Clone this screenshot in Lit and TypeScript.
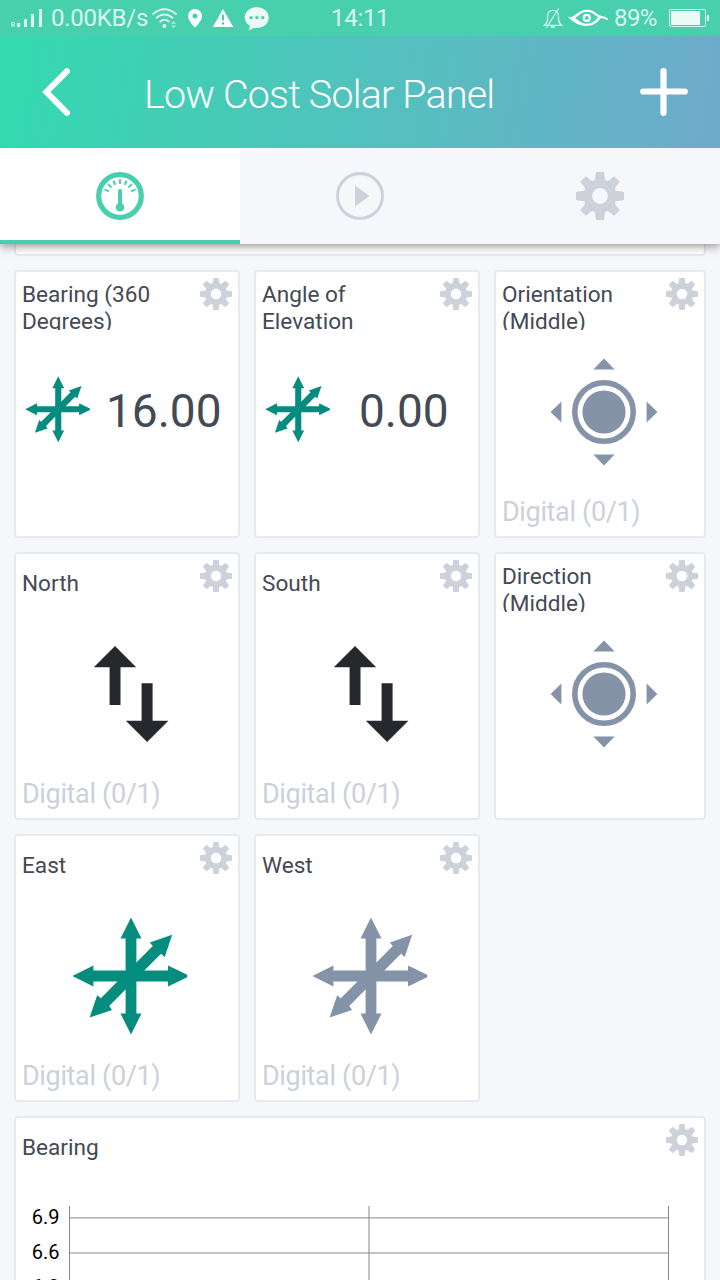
import { LitElement, html, svg, css, nothing } from "lit";
import { customElement, property } from "lit/decorators.js";

type Kind = "axes" | "joystick" | "updown";

interface Tile {
  title: string[];
  kind: Kind;
  tone: string;
  value?: string;
  footer?: string;
}

const TILES: Tile[] = [
  { title: ["Bearing (360", "Degrees)"], kind: "axes", tone: "teal", value: "16.00" },
  { title: ["Angle of", "Elevation"], kind: "axes", tone: "teal", value: "0.00" },
  { title: ["Orientation", "(Middle)"], kind: "joystick", tone: "slate", footer: "Digital (0/1)" },
  { title: ["North"], kind: "updown", tone: "ink", footer: "Digital (0/1)" },
  { title: ["South"], kind: "updown", tone: "ink", footer: "Digital (0/1)" },
  { title: ["Direction", "(Middle)"], kind: "joystick", tone: "slate" },
  { title: ["East"], kind: "axes", tone: "teal", footer: "Digital (0/1)" },
  { title: ["West"], kind: "axes", tone: "slate", footer: "Digital (0/1)" },
];

const gear = (size: number) => html`
  <svg width=${size} height=${size} viewBox="-24 -24 48 48">
    <circle r="12.3" fill="none" stroke="currentColor" stroke-width="8.8"></circle>
    ${[0, 45, 90, 135, 180, 225, 270, 315].map(
      (a) => svg`<path d="M-5.2-15 L-4-24 H4 L5.2-15Z" fill="currentColor" transform=${`rotate(${a})`}></path>`,
    )}
  </svg>`;

const axes = (size: number) => html`
  <svg width=${size} height=${size} viewBox="-59 -59 118 118" fill="currentColor">
    <path d="M0-58.4 L10.5-37.4 H5.4 V37.6 H10.5 L0 58.6 L-10.5 37.6 H-5.4 V-37.4 H-10.5Z"></path>
    <path d="M-58.6 0 L-37.6-10.5 V-5.4 H37 V-10.5 L56.2-1.2 V1.2 L37 10.5 V5.4 H-37.6 V10.5Z"></path>
    <path d="M41.2-41.2 L33.7-19 L30-22.2 L-21.8 29.9 L-18.9 34 L-41.4 41.6 L-33.8 19.2 L-30.2 22.2 L21.8-30 L18.8-33.4Z"></path>
  </svg>`;

const joystick = () => html`
  <svg width="108" height="108" viewBox="-54 -54 108 108" fill="currentColor">
    <circle r="29.2" fill="none" stroke="currentColor" stroke-width="5.6"></circle>
    <circle r="21.6"></circle>
    <path d="M0-53.4 L10.6-42.6 H-10.6Z M0 53.4 L10.6 42.6 H-10.6Z M-53.4 0 L-42.6-10.6 V10.6Z M53.4 0 L42.6-10.6 V10.6Z"></path>
  </svg>`;

const updown = () => html`
  <svg width="76" height="96" viewBox="0 0 76 96" fill="currentColor">
    <path d="M22 0 L43.2 21.2 H27.5 V59 H16.6 V21.2 H.8Z M48.6 37.2 H59.6 V74.7 H75.4 L54.1 96 L32.8 74.7 H48.6Z"></path>
  </svg>`;

@customElement("dash-tile")
class DashTile extends LitElement {
  @property({ attribute: false }) tile!: Tile;

  static styles = css`
    :host { display: flex; flex-direction: column; box-sizing: border-box; border: 2px solid #e6e9ee;
      border-radius: 4px; background: #fff; padding: 6px; }
    svg { display: block; flex: none; }
    .head { display: flex; height: 52px; }
    .title { flex: 1; margin-top: 2px; height: 50px; overflow: hidden; font-size: 22.6px; line-height: 27px;
      color: #434a54; white-space: nowrap; box-sizing: border-box; padding-top: 1px; }
    .title.one { padding-top: 8px; }
    .title div { height: 27px; }
    .gear { color: #ccd1da; }
    .body { flex: 1; display: flex; justify-content: center; align-items: flex-start; }
    .teal { color: #048d7e; }
    .slate { color: #8593a9; }
    .ink { color: #25282d; }
    .body.axes { padding: 23px 0 0 7px; }
    .body.joystick { padding-top: 28px; padding-left: 8px; }
    .body.updown { padding: 34px 0 0 7px; }
    .body.value { padding: 46px 0 0 3px; justify-content: flex-start; }
    .num { flex: 1; text-align: center; font-size: 46px; line-height: 66px; color: #434a54; height: 66px;
      padding: 2px 0 0 4px; }
    .foot { height: 32px; font-size: 27px; line-height: 32px; color: #ccd1da; white-space: nowrap;
      margin-bottom: 2px; letter-spacing: -.35px; }
  `;

  render() {
    const t = this.tile;
    const icon = t.kind === "joystick" ? joystick() : t.kind === "updown" ? updown() : axes(t.value ? 66.5 : 118);
    return html`
      <div class="head">
        <div class="title ${t.title.length === 1 ? "one" : ""}">${t.title.map((l) => html`<div>${l}</div>`)}</div>
        <div class="gear">${gear(32)}</div>
      </div>
      <div class="body ${t.value ? "value" : t.kind} ${t.tone}">
        ${icon}${t.value ? html`<div class="num">${t.value}</div>` : nothing}
      </div>
      ${t.footer ? html`<div class="foot">${t.footer}</div>` : nothing}
    `;
  }
}

@customElement("app-root")
class AppRoot extends LitElement {
  static styles = css`
    :host { display: flex; flex-direction: column; width: 720px; height: 1280px; overflow: hidden;
      background: #f5f7fb; font-family: Roboto, "Liberation Sans", sans-serif; }
    svg { display: block; flex: none; }
    .status { display: flex; flex: none; height: 36px; background: #48d0ae; color: #d9f6ee; font-size: 24px;
      line-height: 36px; align-items: center; white-space: nowrap; }
    .left { width: 331px; display: flex; align-items: center; }
    .net { width: 99px; margin-left: 8px; letter-spacing: -.25px; }
    .time { width: 212px; letter-spacing: -.3px; }
    .pct { width: 54px; margin-left: 5px; letter-spacing: -.6px; }
    .header { flex: none; height: 112px; box-sizing: border-box; display: flex; align-items: center; color: #fff;
      padding: 0 32px 0 42px; background: linear-gradient(99deg, #34d9af 2%, #6eabcb 98%); position: relative; z-index: 2; }
    .name { flex: 1; font-size: 39.4px; font-weight: 300; margin-left: 72px; padding-top: 4px; white-space: nowrap;
      letter-spacing: -.8px; }
    .tabs { flex: none; height: 96px; display: grid; grid-template-columns: repeat(3, 1fr); color: #ccd1da;
      background: #f5f7fb; box-shadow: 0 2px 9px rgba(60, 50, 40, .55); position: relative; z-index: 1; }
    .tab { display: grid; place-items: center; box-sizing: border-box; }
    .tab.on { background: #fff; color: #48d0ae; border-bottom: 4px solid #48d0ae; padding-top: 4px; }
    .prev { flex: none; height: 12px; margin: 0 14px; box-sizing: border-box; border: 2px solid #e6e9ee; border-top: 0;
      border-radius: 0 0 4px 4px; background: #fff; }
    .grid { flex: none; display: grid; grid-template-columns: 226px 226px 212px; grid-auto-rows: 268px; gap: 14px; padding: 14px; }
    .chart { flex: none; margin: 0 14px; height: 300px; box-sizing: border-box; border: 2px solid #e6e9ee;
      border-radius: 4px; background: #fff; padding: 6px; }
    .chead { display: flex; justify-content: space-between; height: 82px; color: #ccd1da; }
    .ctitle { font-size: 22.6px; line-height: 27px; color: #434a54; padding-top: 10px; }
    .plot { font: 20px Roboto, sans-serif; }
  `;

  render() {
    return html`
      <div class="status">
        <div class="left">
          <svg width="43" height="36" viewBox="0 0 43 36" fill="#d9f6ee">
            <path d="M17 23h3v4h-3z M24 19h3v8h-3z M31 14h3v13h-3z M39 9h3v18h-3z"></path>
            <path d="M11.800 27v-4.500h1.800q1 0 1 1.100t-1 1.200h-1.800M13.400 24.900l1.300 2.100" fill="none" stroke="#d9f6ee" stroke-width="1"></path>
          </svg>
          <div class="net">0.00KB/s</div>
          <svg width="125" height="36" viewBox="150 0 125 36">
            <g fill="none" stroke="#d9f6ee" stroke-width="1.900">
              <path d="M152.500 14.500q12-10.500 24 0M156 18.200q8.500-7.500 17 0M159.600 22q4.900-4.400 9.800 0"></path>
            </g>
            <circle cx="164.400" cy="26" r="2" fill="#d9f6ee"></circle>
            <path d="M173.500 20.500l2.800 3.500h-5.600z M173.500 28.500l2.800-3.300h-5.600z" fill="#9be4d1"></path>
            <path fill="#fff" fill-rule="evenodd" d="M195 9a7 7 0 0 0-7 7c0 5 7 11.500 7 11.500s7-6.500 7-11.500a7 7 0 0 0-7-7z M195 13.400a2.500 2.500 0 1 1 0 5 2.500 2.500 0 0 1 0-5z"></path>
            <path fill="#fff" fill-rule="evenodd" d="M223 9l10.200 18h-20.400z M222 14.800v5.600h2.100v-5.600z M222 22.200v2.200h2.100v-2.200z"></path>
            <path fill="#ecfaf6" d="M256.700 7.200c7 0 12 4.500 12 10.400s-5 10.400-12 10.400q-1.500 0-2.800-.3l-5.200 2.800 1.200-4.400c-3.200-1.900-5.200-5-5.200-8.500 0-5.900 5-10.400 12-10.400z"></path>
            <g fill="#48d0ae"><circle cx="251" cy="17.600" r="1.700"></circle><circle cx="256.900" cy="17.600" r="1.700"></circle><circle cx="262.800" cy="17.600" r="1.700"></circle></g>
          </svg>
        </div>
        <div class="time">14:11</div>
        <svg width="66" height="36" viewBox="543 0 66 36">
          <g fill="none" stroke="#d9f6ee" stroke-width="1.200">
            <path d="M544.500 25.300h17q-3-2.300-3-6v-3c0-3.600-2-6-5.500-6s-5.500 2.400-5.500 6v3q0 3.700-3 6z M558.700 8.500l-12.500 19.500"></path>
            <path d="M551 27h4" stroke-width="1.600"></path>
          </g>
          <path fill="#fff" d="M568 17.300q4 .3 7.500-2.600 5.500-4.900 11.500-4.900 5.500 0 9.500 3.700 2.300 2.100 5.500 2.500 3.500.5 6 2.700l-.6 1.600q-2.900-1.700-6.400-2.200-6 8-14.500 8-9.500 0-18.500-8.800z"></path>
          <path fill="#48d0ae" d="M575 17.700q2.500-1 4.500-3 3.500-2.900 7.500-2.900 4.500 0 8 3.100 1.500 1.400 3.300 2.100-5 6.700-11.300 6.700-6 0-12-6z"></path>
          <circle cx="586.800" cy="17.900" r="3" fill="none" stroke="#fff" stroke-width="2.200"></circle>
        </svg>
        <div class="pct">89%</div>
        <svg width="42" height="36" viewBox="668 0 42 36">
          <rect x="669.500" y="9.500" width="36" height="17" rx="1" fill="none" stroke="#d9f6ee"></rect>
          <path fill="#ecfaf6" d="M671 11h29v14h-29z M707 15h2v6h-2z"></path>
        </svg>
      </div>
      <div class="header">
        <svg width="30" height="48" viewBox="0 0 30 48"><path d="M25 3.200L4.400 24l20.600 20.800" fill="none" stroke="#fff" stroke-width="6" stroke-linecap="round"></path></svg>
        <div class="name">Low Cost Solar Panel</div>
        <svg width="48" height="48" viewBox="0 0 48 48"><path d="M3.200 23.500h41.600M23.500 3.200v41.600" stroke="#fff" stroke-width="6.200" stroke-linecap="round"></path></svg>
      </div>
      <div class="tabs">
        <div class="tab on">
          <svg width="48" height="48" viewBox="-24 -24 48 48">
            <circle r="21.300" fill="none" stroke="currentColor" stroke-width="5.200"></circle>
            ${[-67, -45, -23, 0, 23, 45, 67].map(
              (a) => svg`<path d="M0-16.800V-12" transform=${`rotate(${a})`} stroke="currentColor" stroke-width="2"></path>`,
            )}
            <path d="M0-5V11" stroke="currentColor" stroke-width="4" stroke-linecap="round"></path>
            <circle cy="11.200" r="4.300" fill="currentColor"></circle>
          </svg>
        </div>
        <div class="tab">
          <svg width="48" height="48" viewBox="-24 -24 48 48">
            <circle r="22.500" fill="none" stroke="currentColor" stroke-width="3"></circle>
            <path d="M-5-10.500L9.500 0L-5 10.500Z" fill="currentColor"></path>
          </svg>
        </div>
        <div class="tab">${gear(48)}</div>
      </div>
      <div class="prev"></div>
      <div class="grid">${TILES.map((t) => html`<dash-tile .tile=${t}></dash-tile>`)}</div>
      <div class="chart">
        <div class="chead"><div class="ctitle">Bearing</div>${gear(32)}</div>
        <svg class="plot" width="676" height="80" viewBox="22 1206 676 80">
          <g stroke="#888" stroke-width="1">
            <path d="M69.500 1206v80M668.500 1206v80"></path>
            <path d="M69 1217.900h600M69 1253h600M369 1206v80"></path>
          </g>
          <g fill="#000" text-anchor="end"><text x="59.500" y="1224">6.9</text><text x="59.500" y="1259">6.6</text><text x="59.500" y="1294">6.3</text></g>
        </svg>
      </div>
    `;
  }
}
